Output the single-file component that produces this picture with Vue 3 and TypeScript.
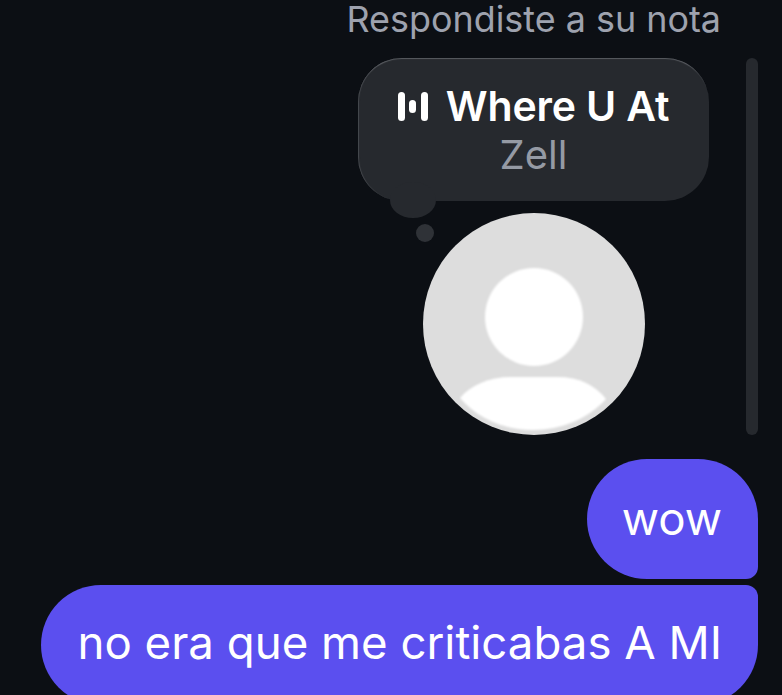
<script setup lang="ts">
const eqBars = [
  { x: 0, y: 0, h: 29 },
  { x: 11, y: 8, h: 13 },
  { x: 23, y: 0, h: 29 },
];
const messages = [
  { id: 1, text: 'wow', kind: 'first' },
  { id: 2, text: 'no era que me criticabas A MI', kind: 'last' },
];
defineOptions({ name: 'NoteReply' });
</script>

<template>
  <div class="chat">
    <div class="label">Respondiste a su nota</div>
    <div class="reply">
      <div class="reply-body">
        <div class="note">
          <div class="note-title">
            <svg class="eq" width="30" height="29" viewBox="0 0 30 29" aria-hidden="true">
              <rect
                v-for="bar in eqBars"
                :key="bar.x"
                :x="bar.x"
                :y="bar.y"
                width="7"
                :height="bar.h"
                rx="3.5"
                fill="#fff"
              />
            </svg>
            <span>Where U At</span>
          </div>
          <div class="note-artist">Zell</div>
          <span class="note-tail"></span>
          <span class="note-dot"></span>
        </div>
        <div class="avatar">
          <svg width="222" height="222" viewBox="0 0 222 222" aria-hidden="true">
            <circle cx="111" cy="111" r="111" fill="#dddddd" />
            <g class="avatar-person">
              <circle cx="111" cy="104" r="49" fill="#fff" />
              <path d="M37 185 C48 172 66 164 88 164 H134 C156 164 172 172 183 186 C165 206 138 217 110 217 C82 217 55 206 37 185 Z" fill="#fff" />
            </g>
          </svg>
        </div>
      </div>
      <div class="reply-bar"></div>
    </div>
    <div
      v-for="msg in messages"
      :key="msg.id"
      :class="['bubble', msg.kind]"
    >
      {{ msg.text }}
    </div>
  </div>
</template>

<style scoped>
.chat {
  width: 782px;
  height: 695px;
  overflow: hidden;
  box-sizing: border-box;
  padding-right: 24px;
  background: #0c0f14;
  display: flex;
  flex-direction: column;
  align-items: flex-end;
  font-family: Inter, "Liberation Sans", sans-serif;
}

.label {
  flex: none;
  height: 38px;
  margin-right: 37px;
  font-size: 35.9px;
  line-height: 38px;
  color: #9ea2ae;
  white-space: nowrap;
}

.reply {
  flex: none;
  display: flex;
  gap: 37px;
  margin-top: 20px;
}

.reply-body {
  width: 351px;
}

.note {
  position: relative;
  box-sizing: border-box;
  height: 143px;
  padding-top: 25px;
  border-radius: 44px;
  background: #26292e;
  box-shadow: inset 0 2px 1px -1px #5a5d62, inset 2px 0 1px -1px #484b50;
  text-align: center;
}

.note-title {
  display: flex;
  justify-content: center;
  align-items: center;
  gap: 18px;
  height: 46px;
  font-size: 41px;
  font-weight: 600;
  letter-spacing: -0.15px;
  line-height: 46px;
  color: #fff;
}

.note-artist {
  height: 48px;
  margin-top: 2px;
  font-size: 40px;
  line-height: 48px;
  color: #959aa4;
}

.note-tail {
  position: absolute;
  left: 32px;
  bottom: -17px;
  width: 46px;
  height: 36px;
  border-radius: 50%;
  background: #26292e;
}

.note-dot {
  position: absolute;
  left: 58px;
  top: 166px;
  width: 18px;
  height: 18px;
  border-radius: 50%;
  background: #2f3237;
}

.avatar {
  width: 222px;
  height: 222px;
  margin: 12px 0 0 65px;
}

.avatar svg {
  display: block;
}

.avatar-person {
  filter: blur(1.2px);
}

.reply-bar {
  width: 12px;
  height: 377px;
  border-radius: 6px;
  background: #26292e;
}

.bubble {
  flex: none;
  box-sizing: border-box;
  height: 120px;
  padding: 0 36px;
  font-size: 45.6px;
  line-height: 116px;
  color: #fff;
  background: #5b4fef;
  white-space: nowrap;
  text-align: right;
}

.bubble.first {
  width: 171px;
  margin-top: 24px;
  padding-left: 34px;
  line-height: 119px;
  border-radius: 60px 60px 12px 60px;
}

.bubble.last {
  width: 717px;
  margin-top: 6px;
  border-radius: 60px 12px 60px 60px;
}
</style>
